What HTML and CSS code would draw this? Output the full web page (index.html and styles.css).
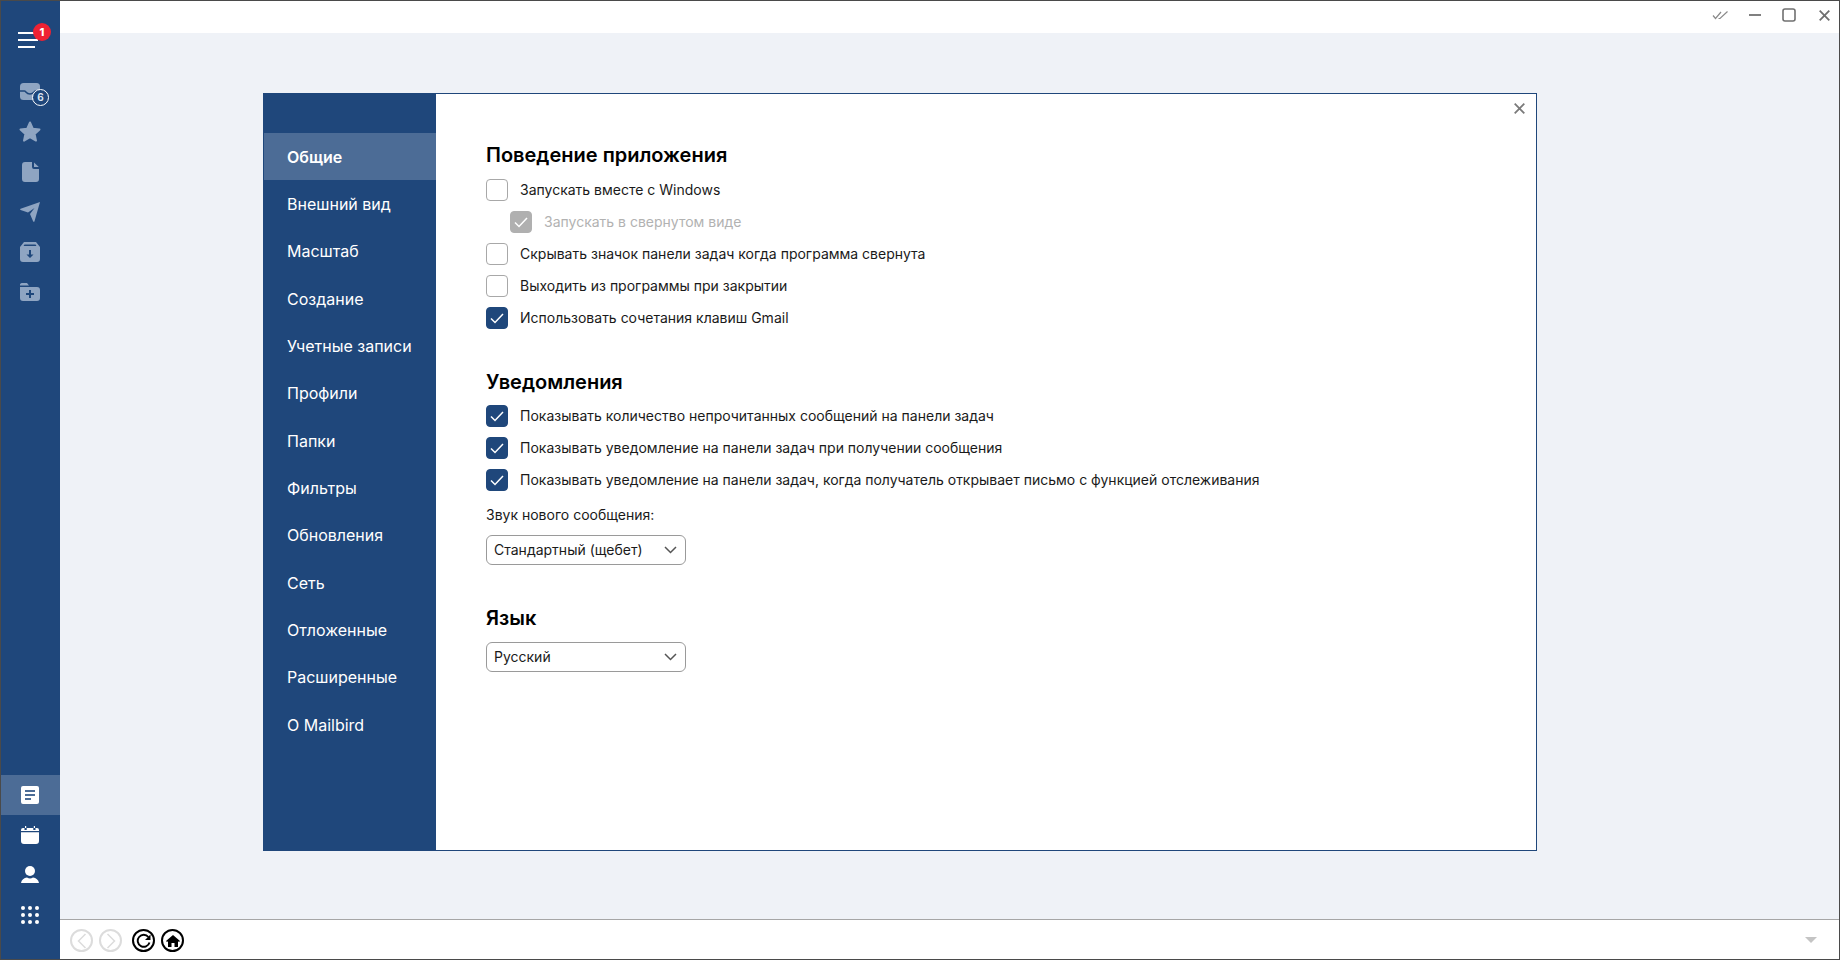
FILE: index.html
```html
<!DOCTYPE html>
<html lang="ru">
<head>
<meta charset="utf-8">
<title>Mailbird</title>
<link rel="stylesheet" href="styles.css">
</head>
<body>
<div class="app">
  <aside class="rail">
    <div class="menu">
      <span class="burger"><i></i><i></i><i></i></span>
      <span class="redbadge">1</span>
    </div>
    <div class="railgroup">
      <div class="railbtn dim">
        <svg class="mailicon" width="20" height="17" viewBox="0 0 20 17"><rect width="20" height="17" rx="3.500" fill="#8fa5c2"/><path d="M0 8h4.500c1.500 0 1.500 3 5.500 3s4-3 5.500-3H20" fill="none" stroke="#1f477b" stroke-width="1.500"/></svg>
        <span class="countbadge">6</span>
      </div>
      <div class="railbtn dim">
        <svg width="24" height="24" viewBox="0 0 24 24"><path fill="#8fa5c2" stroke="#8fa5c2" stroke-width="2" stroke-linejoin="round" d="M12 2.500l2.900 6.300 6.600.7-4.900 4.500 1.400 6.600-6-3.400-6 3.400 1.400-6.600-4.900-4.500 6.600-.7z"/></svg>
      </div>
      <div class="railbtn dim">
        <svg width="17" height="20" viewBox="0 0 17 20"><path fill="#8fa5c2" d="M3 0h7v5a2 2 0 0 0 2 2h5v10a3 3 0 0 1-3 3H3a3 3 0 0 1-3-3V3a3 3 0 0 1 3-3zM12 .5L16.800 5H12z"/></svg>
      </div>
      <div class="railbtn dim">
        <svg width="20" height="20" viewBox="0 0 20 20"><path fill="#8fa5c2" d="M20 0L14.500 19.300c-.2.700-1 .7-1.300.1L10 12l4.500-6-6.500 4.500L.6 8c-.6-.2-.6-1 0-1.200z"/></svg>
      </div>
      <div class="railbtn dim">
        <svg width="20" height="20" viewBox="0 0 20 20"><path fill="#8fa5c2" fill-rule="evenodd" d="M4 0h12l4 5v12a3 3 0 0 1-3 3H3a3 3 0 0 1-3-3V5zM4.500 2.500L3.500 4h13l-1-1.500zM9 8v4.500H6.500L10 16l3.500-3.500H11V8z"/></svg>
      </div>
      <div class="railbtn dim">
        <svg width="20" height="18" viewBox="0 0 20 18"><path fill="#8fa5c2" fill-rule="evenodd" d="M2 0h5l2 2.500H0A2 2 0 0 1 2 0zM0 4h17a3 3 0 0 1 3 3v8a3 3 0 0 1-3 3H3a3 3 0 0 1-3-3zM9 7v3H6v2h3v3h2v-3h3v-2h-3V7z"/></svg>
      </div>
    </div>
    <div class="railbottom">
      <div class="railbtn active">
        <svg width="18" height="18" viewBox="0 0 18 18"><path fill="#fff" fill-rule="evenodd" d="M2 0h14a2 2 0 0 1 2 2v14a2 2 0 0 1-2 2H2a2 2 0 0 1-2-2V2a2 2 0 0 1 2-2zM4 4v2h10V4zM4 8v2h10V8zM4 12v2h6v-2z"/></svg>
      </div>
      <div class="railbtn">
        <svg width="18" height="18" viewBox="0 0 18 18"><path fill="#fff" d="M4 0h1.200v2H4zM12.800 0H14v2h-1.200zM0 5V4a2 2 0 0 1 2-2h1.500v2h2.200V2h6.600v2h2.200V2H16a2 2 0 0 1 2 2v1zM0 6.200h18V15a3 3 0 0 1-3 3H3a3 3 0 0 1-3-3z"/></svg>
      </div>
      <div class="railbtn">
        <svg width="18" height="18" viewBox="0 0 18 18"><circle fill="#fff" cx="9" cy="5" r="5"/><path fill="#fff" d="M0 17c.5-3.500 3-5 6-5.500 1 .7 2 1 3 1s2-.3 3-1c3 .5 5.500 2 6 5.500z"/></svg>
      </div>
      <div class="railbtn">
        <svg width="18" height="18" viewBox="0 0 18 18" fill="#fff"><circle cx="2" cy="2" r="2"/><circle cx="9" cy="2" r="2"/><circle cx="16" cy="2" r="2"/><circle cx="2" cy="9" r="2"/><circle cx="9" cy="9" r="2"/><circle cx="16" cy="9" r="2"/><circle cx="2" cy="16" r="2"/><circle cx="9" cy="16" r="2"/><circle cx="16" cy="16" r="2"/></svg>
      </div>
    </div>
  </aside>
  <div class="main">
    <header class="titlebar">
      <svg width="18" height="10" viewBox="0 0 18 10" fill="none" stroke="#8a8a8a" stroke-width="1.200"><path d="M1 5.500L3.500 8.500 9 2M6.500 8.500L8 8.500 15.500 1.500"/></svg>
      <svg class="tb-min" width="12" height="2" viewBox="0 0 12 2"><rect width="12" height="2" fill="#808080"/></svg>
      <svg class="tb-max" width="14" height="14" viewBox="0 0 14 14" fill="none" stroke="#707070" stroke-width="1.600"><rect x="1" y="1" width="12" height="12" rx="2"/></svg>
      <svg class="tb-close" width="11" height="11" viewBox="0 0 11 11" fill="none" stroke="#707070" stroke-width="1.800"><path d="M.7.7l9.600 9.600M10.300.7L.7 10.300"/></svg>
    </header>
    <main class="stage">
      <section class="dialog">
        <nav class="nav">
          <a class="navitem current">Общие</a>
          <a class="navitem">Внешний вид</a>
          <a class="navitem">Масштаб</a>
          <a class="navitem">Создание</a>
          <a class="navitem">Учетные записи</a>
          <a class="navitem">Профили</a>
          <a class="navitem">Папки</a>
          <a class="navitem">Фильтры</a>
          <a class="navitem">Обновления</a>
          <a class="navitem">Сеть</a>
          <a class="navitem">Отложенные</a>
          <a class="navitem">Расширенные</a>
          <a class="navitem">О Mailbird</a>
        </nav>
        <div class="content">
          <svg class="dlgclose" width="11" height="11" viewBox="0 0 11 11" fill="none" stroke="#7a7a7a" stroke-width="1.800"><path d="M.7.7l9.600 9.600M10.300.7L.7 10.300"/></svg>
          <h2 class="h first">Поведение приложения</h2>
          <label class="row"><span class="cb"></span>Запускать вместе с Windows</label>
          <label class="row sub disabled"><span class="cb on"><svg width="14" height="11" viewBox="0 0 14 11" fill="none" stroke="#fff" stroke-width="1.500"><path d="M1 5.500L5 9.500 13 1"/></svg></span>Запускать в свернутом виде</label>
          <label class="row"><span class="cb"></span>Скрывать значок панели задач когда программа свернута</label>
          <label class="row"><span class="cb"></span>Выходить из программы при закрытии</label>
          <label class="row"><span class="cb on"><svg width="14" height="11" viewBox="0 0 14 11" fill="none" stroke="#fff" stroke-width="1.500"><path d="M1 5.500L5 9.500 13 1"/></svg></span>Использовать сочетания клавиш Gmail</label>
          <h2 class="h second">Уведомления</h2>
          <label class="row"><span class="cb on"><svg width="14" height="11" viewBox="0 0 14 11" fill="none" stroke="#fff" stroke-width="1.500"><path d="M1 5.500L5 9.500 13 1"/></svg></span>Показывать количество непрочитанных сообщений на панели задач</label>
          <label class="row"><span class="cb on"><svg width="14" height="11" viewBox="0 0 14 11" fill="none" stroke="#fff" stroke-width="1.500"><path d="M1 5.500L5 9.500 13 1"/></svg></span>Показывать уведомление на панели задач при получении сообщения</label>
          <label class="row"><span class="cb on"><svg width="14" height="11" viewBox="0 0 14 11" fill="none" stroke="#fff" stroke-width="1.500"><path d="M1 5.500L5 9.500 13 1"/></svg></span>Показывать уведомление на панели задач, когда получатель открывает письмо с функцией отслеживания</label>
          <div class="fieldlabel">Звук нового сообщения:</div>
          <div class="select">Стандартный (щебет)<svg width="13" height="8" viewBox="0 0 13 8" fill="none" stroke="#555" stroke-width="1.500"><path d="M1 1l5.500 5.500L12 1"/></svg></div>
          <h2 class="h third">Язык</h2>
          <div class="select">Русский<svg width="13" height="8" viewBox="0 0 13 8" fill="none" stroke="#555" stroke-width="1.500"><path d="M1 1l5.500 5.500L12 1"/></svg></div>
        </div>
      </section>
    </main>
    <footer class="bottombar">
      <span class="round off"><svg width="10" height="16" viewBox="0 0 10 16" fill="none" stroke="#dcdcdc" stroke-width="1.500"><path d="M8.500 1L1.500 8l7 7"/></svg></span>
      <span class="round off"><svg width="10" height="16" viewBox="0 0 10 16" fill="none" stroke="#dcdcdc" stroke-width="1.500"><path d="M1.500 1l7 7-7 7"/></svg></span>
      <span class="round on refresh"><svg width="15" height="15" viewBox="0 0 15 15" fill="none" stroke="#000" stroke-width="1.900"><path d="M12.400 4A6 6 0 1 0 13.500 9.500"/><path fill="#000" stroke="none" d="M14.500 1.500v5.500H9z"/></svg></span>
      <span class="round on"><svg width="14" height="14" viewBox="0 0 14 14"><path fill="#000" d="M7 1l7 6-1 1-1-.8V13H8.500V9h-3v4H2V7.200L1 8 0 7z"/></svg></span>
      <svg class="drop" width="12" height="6" viewBox="0 0 12 6"><path fill="#c4c4c4" d="M0 0h12L6 6z"/></svg>
    </footer>
  </div>
</div>
</body>
</html>
```
FILE: styles.css
```css
* { box-sizing: border-box; }
html, body { margin: 0; height: 100%; }
body { font-family: Inter, "Noto Sans", sans-serif; color: #111; }
.app { width: 1840px; height: 960px; display: flex; border: 1px solid #4a4a4a; overflow: hidden; background: #fff; }

.rail { width: 59px; background: #1f477b; display: flex; flex-direction: column; flex: none; }
.menu { height: 71px; position: relative; flex: none; }
.burger { position: absolute; left: 17px; top: 31px; display: flex; flex-direction: column; gap: 5px; }
.burger i { display: block; width: 17px; height: 2px; background: #fff; }
.burger i:first-child, .burger i:nth-child(2) { width: 20px; }
.redbadge { position: absolute; left: 32px; top: 22px; width: 18px; height: 18px; border-radius: 50%; background: #ee2233; color: #fff; font-size: 11px; font-weight: 800; line-height: 18px; text-align: center; }
.railgroup { display: flex; flex-direction: column; }
.railbtn { height: 40px; display: flex; align-items: center; justify-content: center; position: relative; flex: none; padding-right: 1px; }
.mailicon { margin-bottom: 2px; }
.countbadge { position: absolute; left: 31px; top: 17px; width: 17px; height: 17px; border-radius: 50%; border: 1px solid #fff; background: #1f477b; color: #d8e2ef; font-size: 10px; font-weight: 700; line-height: 15px; text-align: center; }
.railbottom { margin-top: auto; padding-bottom: 24px; display: flex; flex-direction: column; }
.railbtn.active { background: #4c6c96; }

.main { flex: 1; display: flex; flex-direction: column; min-width: 0; }
.titlebar { height: 32px; background: #fff; display: flex; align-items: center; justify-content: flex-end; padding: 0 9px 4px 0; flex: none; }
.titlebar svg { margin-left: 19px; }
.titlebar .tb-min { margin-left: 19px; }
.titlebar .tb-max { margin-left: 21px; }
.titlebar .tb-close { margin-left: 23px; }
.stage { flex: 1; background: #eff2f7; padding: 60px 0 0 203px; min-height: 0; }
.dialog { width: 1274px; height: 758px; display: flex; border: 1px solid #1f477b; background: #fff; }
.nav { width: 172px; background: #1f477b; padding-top: 39px; flex: none; display: flex; flex-direction: column; }
.navitem { height: 47.33px; padding: 1.750px 0 0 23px; color: #fff; font-size: 16px; line-height: 45.58px; }
.navitem.current { background: #4c6c96; font-weight: 600; }

.content { flex: 1; position: relative; padding: 0 0 0 50px; }
.dlgclose { position: absolute; right: 11px; top: 9px; }
.h { margin: 0; font-size: 20px; font-weight: 600; line-height: 24px; color: #000; }
.h.first { padding-top: 49px; height: 73px; margin-bottom: 7px; }
.h.second { margin-top: 36px; margin-bottom: 6px; }
.h.third { margin-top: 41px; margin-bottom: 12px; }
.row { display: flex; align-items: center; height: 32px; padding-bottom: 2px; font-size: 14px; color: #1a1a1a; }
.row.sub { padding-left: 24px; }
.row.disabled { color: #b2b2b2; }
.cb { width: 22px; height: 22px; border-radius: 4px; border: 1px solid #a8a8a8; background: #fff; margin: 2px 12px 0 0; display: flex; align-items: center; justify-content: center; flex: none; }
.cb.on { background: #1f477b; border-color: #1f477b; }
.disabled .cb.on { background: #b0b0b0; border-color: #b0b0b0; }
.fieldlabel { font-size: 14px; color: #1a1a1a; margin-top: 9px; line-height: 20px; margin-bottom: 10px; }
.select { width: 200px; height: 30px; border: 1px solid #9a9a9a; border-radius: 6px; font-size: 14px; color: #1a1a1a; display: flex; align-items: center; justify-content: space-between; padding: 0 8px 1px 7px; }

.bottombar { height: 40px; flex: none; background: #fff; border-top: 1px solid #a6a6a6; display: flex; align-items: center; padding: 2px 0 0 10px; gap: 6px; position: relative; }
.round { width: 23px; height: 23px; border-radius: 50%; border: 2px solid #000; display: flex; align-items: center; justify-content: center; }
.round.off { border-color: #dcdcdc; }
.round.refresh { margin-left: 4px; }
.drop { position: absolute; right: 22px; top: 17px; }
```
